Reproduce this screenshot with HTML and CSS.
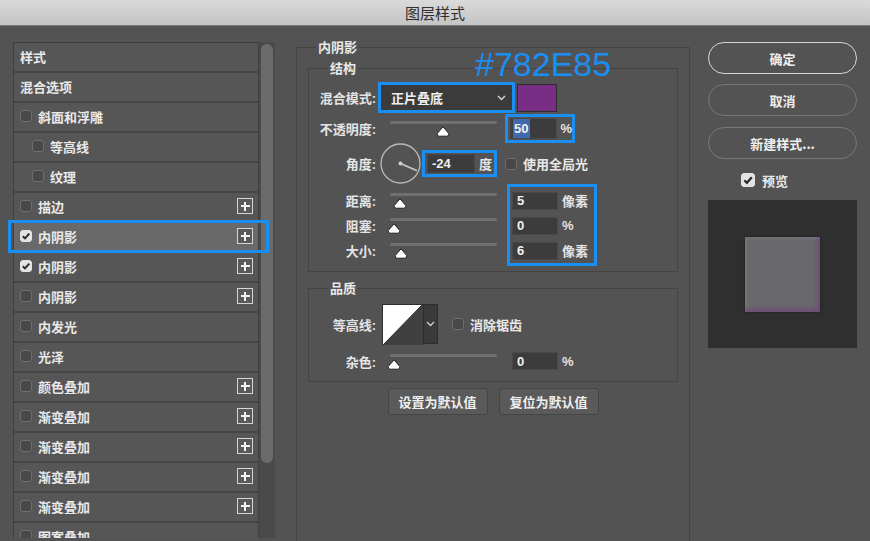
FILE: index.html
```html
<!DOCTYPE html>
<html lang="zh-CN">
<head>
<meta charset="utf-8">
<title>图层样式</title>
<link rel="stylesheet" href="styles.css">
</head>
<body>
<div class="titlebar">图层样式</div>
<div class="main">
  <div class="sidebar">
    <div class="list">
      <div class="row"><span class="txt">样式</span></div>
      <div class="row"><span class="txt">混合选项</span></div>
      <div class="row"><span class="cb"></span><span class="txt">斜面和浮雕</span></div>
      <div class="row sub"><span class="cb"></span><span class="txt">等高线</span></div>
      <div class="row sub"><span class="cb"></span><span class="txt">纹理</span></div>
      <div class="row"><span class="cb"></span><span class="txt">描边</span><span class="plus"></span></div>
      <div class="row selected"><span class="cb on"><svg width="12" height="12" viewBox="0 0 12 12"><path d="M2.8 6.2 L5 8.4 L9.3 3.6" fill="none" stroke="#2b2b2b" stroke-width="2"/></svg></span><span class="txt">内阴影</span><span class="plus"></span></div>
      <div class="row"><span class="cb on"><svg width="12" height="12" viewBox="0 0 12 12"><path d="M2.8 6.2 L5 8.4 L9.3 3.6" fill="none" stroke="#2b2b2b" stroke-width="2"/></svg></span><span class="txt">内阴影</span><span class="plus"></span></div>
      <div class="row"><span class="cb"></span><span class="txt">内阴影</span><span class="plus"></span></div>
      <div class="row"><span class="cb"></span><span class="txt">内发光</span></div>
      <div class="row"><span class="cb"></span><span class="txt">光泽</span></div>
      <div class="row"><span class="cb"></span><span class="txt">颜色叠加</span><span class="plus"></span></div>
      <div class="row"><span class="cb"></span><span class="txt">渐变叠加</span><span class="plus"></span></div>
      <div class="row"><span class="cb"></span><span class="txt">渐变叠加</span><span class="plus"></span></div>
      <div class="row"><span class="cb"></span><span class="txt">渐变叠加</span><span class="plus"></span></div>
      <div class="row"><span class="cb"></span><span class="txt">渐变叠加</span><span class="plus"></span></div>
      <div class="row"><span class="cb"></span><span class="txt">图案叠加</span></div>
    </div>
    <div class="scroll"><div class="thumb"></div></div>
    <div class="sel-mark"></div>
  </div>

  <div class="center">
    <div class="group outer">
      <div class="legend">内阴影</div>

      <div class="group struct">
        <div class="legend">结构</div>

        <div class="frow r-blend">
          <span class="flabel">混合模式:</span>
          <div class="dropdown mark">
            <span class="dd-text">正片叠底</span>
            <svg class="chev" width="9" height="6" viewBox="0 0 9 6"><path d="M1 1 L4.5 4.5 L8 1" fill="none" stroke="#d8d8d8" stroke-width="1.4"/></svg>
          </div>
          <span class="swatch"></span>
        </div>

        <div class="frow r-opacity">
          <span class="flabel">不透明度:</span>
          <div class="slider"><div class="track"></div><svg class="knob" style="left:46px" width="14" height="11" viewBox="0 0 14 11"><path d="M7 0.8 L12.8 7.6 Q13.2 10.2 10.8 10.2 L3.2 10.2 Q0.8 10.2 1.2 7.6 Z" fill="#fff" stroke="#1e1e1e" stroke-width="1"/></svg></div>
          <div class="mark valbox">
            <span class="field"><span class="sel">50</span></span><span class="unit">%</span>
          </div>
        </div>

        <div class="frow r-angle">
          <span class="flabel">角度:</span>
          <svg class="dial" width="41" height="41" viewBox="0 0 41 41"><circle cx="20.5" cy="20.5" r="19.5" fill="none" stroke="#b9b9b9" stroke-width="1.3"/><line x1="20.5" y1="20.5" x2="37" y2="27.8" stroke="#c8c8c8" stroke-width="1.8"/><circle cx="20.5" cy="20.5" r="2" fill="#cfcfcf"/></svg>
          <div class="mark anglebox">
            <span class="field f-angle">-24</span><span class="unit">度</span>
          </div>
          <span class="cb cb-global"></span><span class="cbtext">使用全局光</span>
        </div>

        <div class="r-trio">
          <div class="trio-left">
            <div class="trow"><span class="flabel">距离:</span><div class="slider"><div class="track"></div><svg class="knob" style="left:3px" width="14" height="11" viewBox="0 0 14 11"><path d="M7 0.8 L12.8 7.6 Q13.2 10.2 10.8 10.2 L3.2 10.2 Q0.8 10.2 1.2 7.6 Z" fill="#fff" stroke="#1e1e1e" stroke-width="1"/></svg></div></div>
            <div class="trow"><span class="flabel">阻塞:</span><div class="slider"><div class="track"></div><svg class="knob" style="left:-3px" width="14" height="11" viewBox="0 0 14 11"><path d="M7 0.8 L12.8 7.6 Q13.2 10.2 10.8 10.2 L3.2 10.2 Q0.8 10.2 1.2 7.6 Z" fill="#fff" stroke="#1e1e1e" stroke-width="1"/></svg></div></div>
            <div class="trow"><span class="flabel">大小:</span><div class="slider"><div class="track"></div><svg class="knob" style="left:4px" width="14" height="11" viewBox="0 0 14 11"><path d="M7 0.8 L12.8 7.6 Q13.2 10.2 10.8 10.2 L3.2 10.2 Q0.8 10.2 1.2 7.6 Z" fill="#fff" stroke="#1e1e1e" stroke-width="1"/></svg></div></div>
          </div>
          <div class="mark triobox">
            <div class="trow"><span class="field f-small">5</span><span class="unit">像素</span></div>
            <div class="trow"><span class="field f-small">0</span><span class="unit">%</span></div>
            <div class="trow"><span class="field f-small">6</span><span class="unit">像素</span></div>
          </div>
        </div>
      </div>

      <div class="group quality">
        <div class="legend">品质</div>
        <div class="frow r-contour">
          <span class="flabel">等高线:</span>
          <div class="contour">
            <svg width="40" height="40" viewBox="0 0 40 40"><rect x="0" y="0" width="40" height="40" fill="#404040"/><polygon points="0,0 39,0 0,40" fill="#ffffff"/><line x1="39" y1="0" x2="0" y2="40" stroke="#2a2a2a" stroke-width="1"/></svg>
            <span class="contour-arrow"><svg width="9" height="6" viewBox="0 0 9 6"><path d="M1 1 L4.5 4.5 L8 1" fill="none" stroke="#d0d0d0" stroke-width="1.3"/></svg></span>
          </div>
          <span class="cb cb-anti"></span><span class="cbtext">消除锯齿</span>
        </div>
        <div class="frow r-noise">
          <span class="flabel">杂色:</span>
          <div class="slider"><div class="track"></div><svg class="knob" style="left:-3px" width="14" height="11" viewBox="0 0 14 11"><path d="M7 0.8 L12.8 7.6 Q13.2 10.2 10.8 10.2 L3.2 10.2 Q0.8 10.2 1.2 7.6 Z" fill="#fff" stroke="#1e1e1e" stroke-width="1"/></svg></div>
          <span class="field f-small f-noise">0</span><span class="unit">%</span>
        </div>
      </div>

      <div class="defaults">
        <button class="dbtn">设置为默认值</button>
        <button class="dbtn">复位为默认值</button>
      </div>
    </div>
  </div>

  <div class="rightcol">
    <button class="pill primary">确定</button>
    <button class="pill">取消</button>
    <button class="pill">新建样式...</button>
    <div class="preview-row">
      <span class="cb on big"><svg width="14" height="14" viewBox="0 0 14 14"><path d="M3.3 7.2 L5.9 9.8 L10.8 4.2" fill="none" stroke="#2b2b2b" stroke-width="2.2"/></svg></span>
      <span class="cbtext">预览</span>
    </div>
    <div class="preview"><div class="square"></div></div>
  </div>
</div>
<div class="hex-note">#782E85</div>
</body>
</html>
```

FILE: styles.css
```css
* { box-sizing: border-box; margin: 0; padding: 0; }
html, body { width: 870px; height: 541px; overflow: hidden; }
body {
  background: #535353;
  font-family: "Liberation Sans", "Noto Sans CJK SC", sans-serif;
  font-size: 13px;
  color: #e8e8e8;
  position: relative;
}

.titlebar {
  height: 26px;
  background: linear-gradient(#dadada, #c4c4c4);
  border-bottom: 1px solid #7c7c7c;
  text-align: center;
  font-family: "Noto Sans CJK SC", sans-serif;
  font-size: 15px;
  line-height: 25px;
  color: #2f2f2f;
}

.main { display: flex; align-items: flex-start; height: 515px; }

/* ---------- left list ---------- */
.sidebar { position: relative; display: flex; margin-left: 13px; margin-top: 16px; height: 496px; }
.list {
  width: 245px;
  height: 496px;
  overflow: hidden;
  border-top: 1px solid #3e3e3e;
  border-left: 1px solid #3e3e3e;
}
.row {
  height: 30px;
  border-bottom: 2px solid #454545;
  background: #565656;
  display: flex;
  align-items: center;
  padding: 0 5px 2px 6px;
}
.row.sub { padding-left: 18px; }
.row .txt { font-family: "Noto Sans CJK SC", sans-serif; font-weight: 700; color: #e9e9e9; }
.row .cb { margin-right: 6px; }
.row.selected { background: #696969; }
.sel-mark {
  position: absolute;
  left: -5px; top: 178px;
  width: 261px; height: 33px;
  border: 3px solid #1b8ef2;
}
.plus {
  margin-left: auto;
  width: 16px; height: 16px;
  border: 1.5px solid #d4d4d4;
  position: relative;
  background: #5a5a5a;
}
.plus::before, .plus::after {
  content: "";
  position: absolute;
  background: #f2f2f2;
}
.plus::before { left: 2.5px; right: 2.5px; top: 5.5px; height: 2px; }
.plus::after { top: 2.5px; bottom: 2.5px; left: 5.5px; width: 2px; }

.cb {
  display: inline-flex;
  width: 12px; height: 12px;
  border: 1px solid #6e6e6e;
  background: #484848;
  border-radius: 3px;
  flex-shrink: 0;
}
.cb.on { background: #e4e4e4; border-color: #e4e4e4; }
.cb.on svg { margin: -1px; }
.cb.big { width: 14px; height: 14px; }

.scroll {
  width: 17px;
  height: 496px;
  background: #4a4a4a;
  border-left: 1px solid #404040;
  padding: 2px 2px 0 2px;
}
.thumb { width: 12px; height: 419px; border-radius: 6px; background: #6b6b6b; }

/* ---------- center groups ---------- */
.center { margin-left: 21px; margin-top: 21px; }
.group { border: 1px solid #444444; }
.outer {
  width: 394px;
  height: 520px;
  border-bottom: none;
  padding: 0 11px;
}
.legend {
  width: fit-content;
  margin-top: -8px;
  padding: 0 2px;
  background: #535353;
  line-height: 14px;
  font-family: "Noto Sans CJK SC", sans-serif;
  font-weight: 700;
  color: #e9e9e9;
}
.outer > .legend { margin-left: 8px; }
.struct { margin-top: 14px; padding: 0 10px 5px 10px; }
.struct > .legend, .quality > .legend { margin-left: 9px; }
.quality { margin-top: 16px; padding: 0 10px 11px 10px; }

.frow { display: flex; align-items: center; }
.flabel {
  width: 57px;
  flex-shrink: 0;
  text-align: right;
  white-space: nowrap;
  color: #e4e4e4;
  font-weight: 700;
}
.mark { border: 3px solid #1b8ef2; }

.r-blend { margin-top: 7px; height: 31px; }
.dropdown {
  margin-left: 2px;
  width: 137px; height: 31px;
  background: #3b3b3b;
  display: flex;
  align-items: center;
  padding: 0 6px 0 10px;
}
.dd-text { font-family: "Noto Sans CJK SC", sans-serif; font-weight: 700; color: #f0f0f0; }
.chev { margin-left: auto; }
.swatch {
  margin-left: 2px;
  width: 40px; height: 28px;
  background: #782E85;
  border: 1px solid #2d2d2d;
}

.slider { position: relative; margin-left: 14px; width: 107px; height: 18px; }
.track { margin-top: 2px; height: 3px; border-radius: 2px; background: #707070; }
.knob { position: absolute; top: 7px; }

.r-opacity { height: 30px; }
.valbox {
  margin-left: 8px;
  width: 70px; height: 29px;
  display: flex; align-items: center;
  padding-left: 2px;
}
.field {
  display: inline-flex;
  align-items: center;
  width: 48px; height: 21px;
  background: #3c3c3c;
  border: 1px solid #494949;
  padding-left: 2px;
  color: #f0f0f0;
  font-weight: 700;
}
.sel { background: #3f6ab0; height: 19px; line-height: 19px; padding: 0 2px 0 1px; }
.unit { margin-left: 3px; color: #e4e4e4; font-weight: 700; }

.r-angle { height: 41px; }
.dial { margin-left: 4px; }
.anglebox {
  margin-left: 1px;
  width: 75px; height: 27px;
  display: flex; align-items: center;
  padding-left: 2px;
}
.f-angle { height: 19px; padding-left: 4px; }
.anglebox .unit { margin-left: 4px; }
.cb-global { margin-left: 8px; }
.cbtext { margin-left: 6px; font-family: "Noto Sans CJK SC", sans-serif; font-weight: 700; color: #e9e9e9; }

.r-trio { display: flex; }
.trio-left { margin-top: 4px; }
.trow { display: flex; align-items: center; height: 25px; }
.trio-left .slider { height: 18px; margin-top: -2px; }
.triobox {
  margin-left: 10px;
  width: 90px;
  padding: 1px 0 0 2px;
}
.f-small { width: 46px; height: 18px; padding-left: 4px; }
.triobox .unit { margin-left: 4px; }

.r-contour { margin-top: 9px; height: 40px; }
.contour {
  margin-left: 6px;
  display: flex;
  height: 40px;
  border: 1px solid #2e2e2e;
}
.contour svg { display: block; }
.contour-arrow {
  width: 14px;
  background: #3a3a3a;
  border-left: 1px solid #2e2e2e;
  display: flex; align-items: center; justify-content: center;
}
.cb-anti { margin-left: 14px; }

.r-noise { margin-top: 8px; height: 18px; }
.f-noise { margin-left: 15px; }
.r-noise .unit { margin-left: 4px; }

.defaults {
  margin-top: 6px;
  display: flex;
  justify-content: center;
  gap: 11px;
}
.dbtn {
  width: 100px; height: 27px;
  background: #5a5a5a;
  border: 1px solid #454545;
  border-radius: 3px;
  color: #efefef;
  font-family: "Noto Sans CJK SC", sans-serif;
  font-weight: 700;
  font-size: 13px;
}

/* ---------- right column ---------- */
.rightcol { margin-left: 18px; margin-top: 16px; width: 149px; display: flex; flex-direction: column; }
.pill {
  height: 32px;
  border-radius: 16px;
  background: #535353;
  border: 1.5px solid #777;
  color: #efefef;
  font-family: "Noto Sans CJK SC", sans-serif;
  font-weight: 700;
  font-size: 13px;
}
.pill + .pill { margin-top: 10px; }
.pill.primary { border-color: #d6d6d6; }
.pill:nth-child(3) { margin-top: 11px; }
.preview-row { margin-top: 12px; height: 18px; display: flex; align-items: center; padding-left: 33px; }
.preview-row .cbtext { margin-left: 7px; }
.preview {
  margin-top: 11px;
  height: 148px;
  background: #2f2f2f;
  display: flex; align-items: center; justify-content: center;
}
.square {
  width: 75px; height: 75px;
  background: #69696b;
  box-shadow: inset -3px -3px 4px rgba(120, 46, 133, 0.5), inset 2px 2px 3px rgba(150, 150, 160, 0.3), 0 0 2px #1e1e1e;
}

/* annotation */
.hex-note {
  position: absolute;
  left: 475px; top: 47px;
  font-family: "Liberation Sans", sans-serif;
  font-size: 34px;
  line-height: 34px;
  color: #1b8ef2;
}
```
